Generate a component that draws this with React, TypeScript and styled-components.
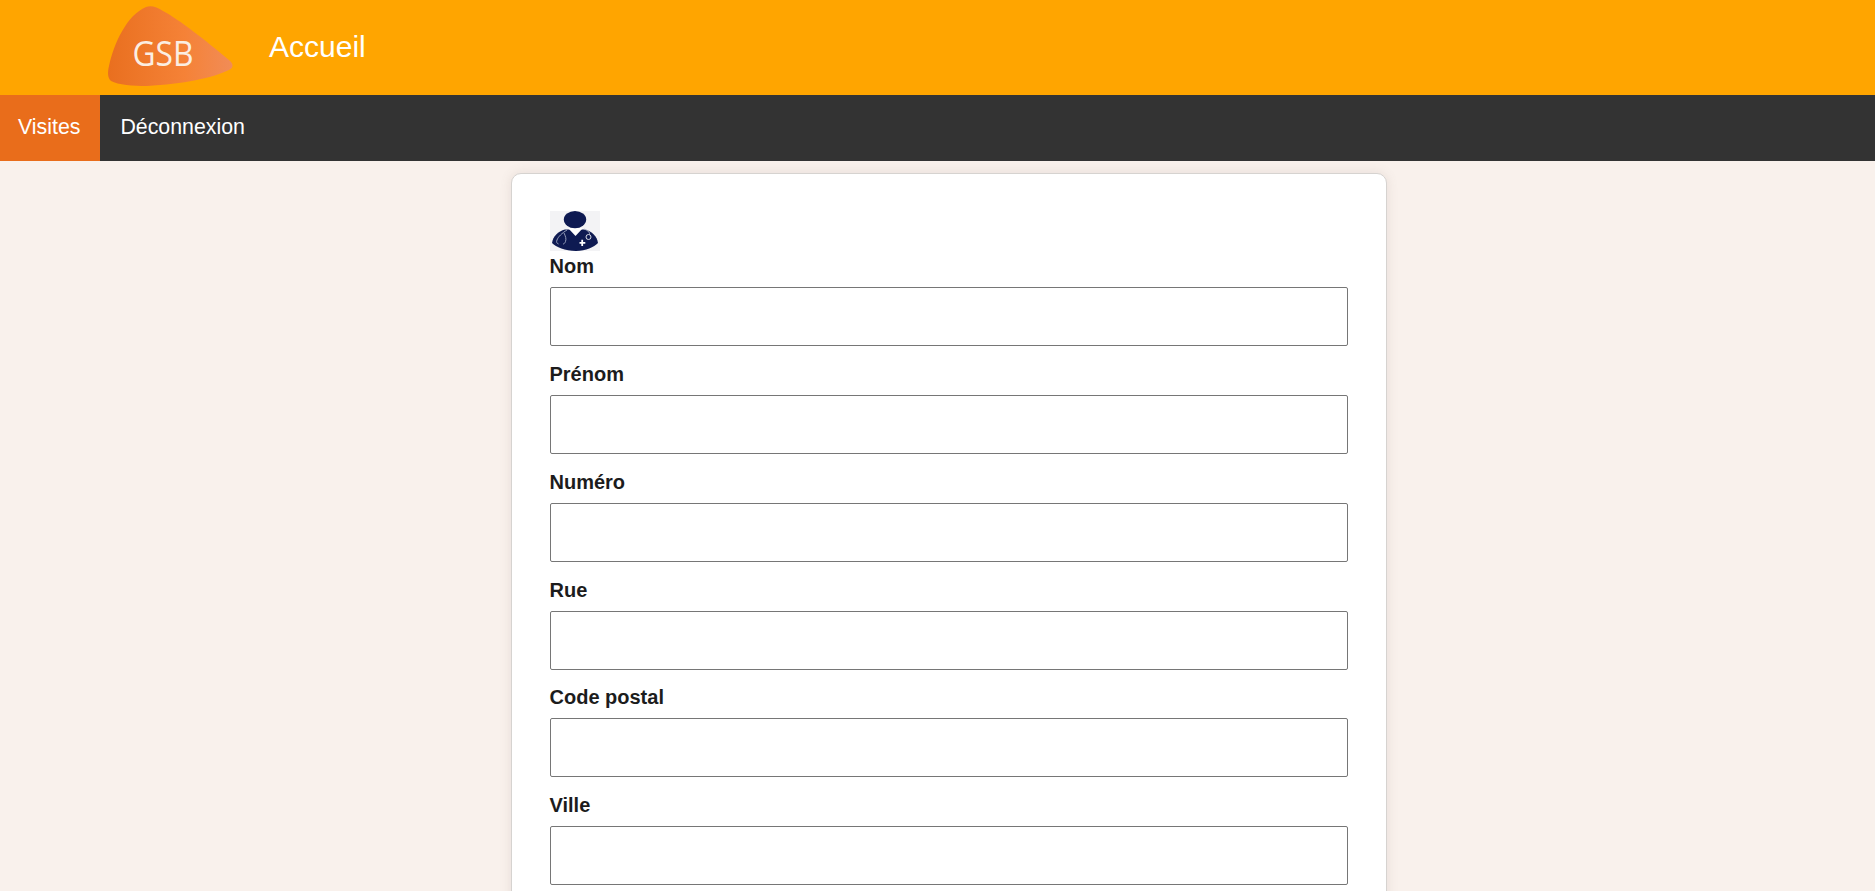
import React from "react";
import styled, { createGlobalStyle } from "styled-components";

const Global = createGlobalStyle`
  html, body { margin: 0; padding: 0; height: 891px; overflow: hidden; }
  body { background: #f9f1ec; font-family: "Liberation Sans", Arial, sans-serif; color: #1b1b1b; }
  * { box-sizing: border-box; }
`;

const Header = styled.header`
  display: flex;
  align-items: flex-start;
  height: 95px;
  background: #ffa500;
  padding-left: 105px;
`;

const Logo = styled.svg`
  display: block;
  width: 130px;
  height: 95px;
  flex: none;
`;

const Title = styled.h1`
  margin: 30px 0 0 0;
  padding-left: 34px;
  font-size: 30px;
  line-height: 34px;
  font-weight: 400;
  color: #fff;
`;

const Nav = styled.nav`
  display: flex;
  height: 66px;
  background: #333;
`;

const NavLink = styled.a<{ $active?: boolean }>`
  display: flex;
  align-items: center;
  height: 100%;
  padding: ${(p) => (p.$active ? "0 20px 2px 18px" : "0 20px 2px")};
  font-size: 21.33px;
  color: #fff;
  background: ${(p) => (p.$active ? "#e96d1b" : "transparent")};
`;

const Main = styled.main`
  display: flex;
  justify-content: center;
  padding: 12px 0 0 22px;
`;

const Card = styled.form`
  width: 876px;
  padding: 37px 38px 38px;
  background: #fff;
  border: 1px solid #d6d3d0;
  border-radius: 10px;
  box-shadow: 0 0 12px rgba(120, 100, 90, 0.14);
`;

const Avatar = styled.svg`
  display: block;
  width: 50px;
  height: 40px;
`;

const Field = styled.div`
  margin-bottom: 12.85px;
`;

const Label = styled.label`
  display: block;
  font-size: 20px;
  line-height: 23px;
  font-weight: 700;
  padding-top: 4px;
  margin-bottom: 9px;
  color: #1c1c1c;
`;

const Input = styled.input`
  display: block;
  width: 100%;
  height: 59px;
  border: 1px solid #767676;
  border-radius: 2px;
  background: #fff;
`;

const fields = ["Nom", "Prénom", "Numéro", "Rue", "Code postal", "Ville"];

export default function App() {
  return (
    <>
      <Global />
      <Header>
        <Logo viewBox="0 0 130 95" aria-label="GSB">
          <defs>
            <linearGradient id="logoFill" x1="0" x2="1" y1="0" y2="0">
              <stop offset="0" stopColor="#e96f1f" />
              <stop offset="0.62" stopColor="#f58237" />
              <stop offset="1" stopColor="#f18c57" />
            </linearGradient>
          </defs>
          <path
            d="M41 7 C46 5 52 7 58 11 C75 20 100 40 124 60 C128 63 129 67 125 69.5 C108 78 78 84 42 86 C28 86 13 85 6 81 C2.5 78 2.5 72 4 66 C9 43 22 15 41 7 Z"
            fill="url(#logoFill)"
          />
          <text x="27.5" y="65.5" fontFamily="'Open Sans', sans-serif" fontSize="35" textLength="61" lengthAdjust="spacingAndGlyphs" fill="#fbeee2">
            GSB
          </text>
        </Logo>
        <Title>Accueil</Title>
      </Header>
      <Nav>
        <NavLink $active>Visites</NavLink>
        <NavLink>Déconnexion</NavLink>
      </Nav>
      <Main>
        <Card>
          <Avatar viewBox="0 0 50 40" aria-hidden="true">
            <rect width="50" height="40" fill="#f3f3f5" />
            <path
              d="M15 18.5 C8 20.5 3 25 2 32 C6 36 15 40 26 40 C36 40 44 36 48 32 C47 25 42 20.5 35 18.5 Z"
              fill="#0e1a52"
            />
            <path d="M18 17 L25.5 25 L33 17 Z" fill="#ffffff" />
            <ellipse cx="25" cy="8.6" rx="11.2" ry="8.6" fill="#0e1a52" />
            <path d="M17 19 C12 22 8 26 7 29 C6 31 7 32.5 8.5 33 M14 22 C15.5 25 16.5 28 15.5 30.5 C15 32 14 33 13 33" fill="none" stroke="#a3aac4" strokeWidth="0.9" />
            <path d="M34 18 C37 19 40 21 39.5 23.5" fill="none" stroke="#b8bdd0" strokeWidth="0.9" />
            <circle cx="38.5" cy="26" r="2.5" fill="none" stroke="#d8dbe6" strokeWidth="1" />
            <path d="M29.5 31 h1.8 v-2.2 h1.8 v2.2 h2.2 v1.8 h-2.2 V35 h-1.8 v-2.2 h-1.8 Z" fill="#fff" />
          </Avatar>
          {fields.map((f) => (
            <Field key={f}>
              <Label>{f}</Label>
              <Input type="text" />
            </Field>
          ))}
        </Card>
      </Main>
    </>
  );
}
